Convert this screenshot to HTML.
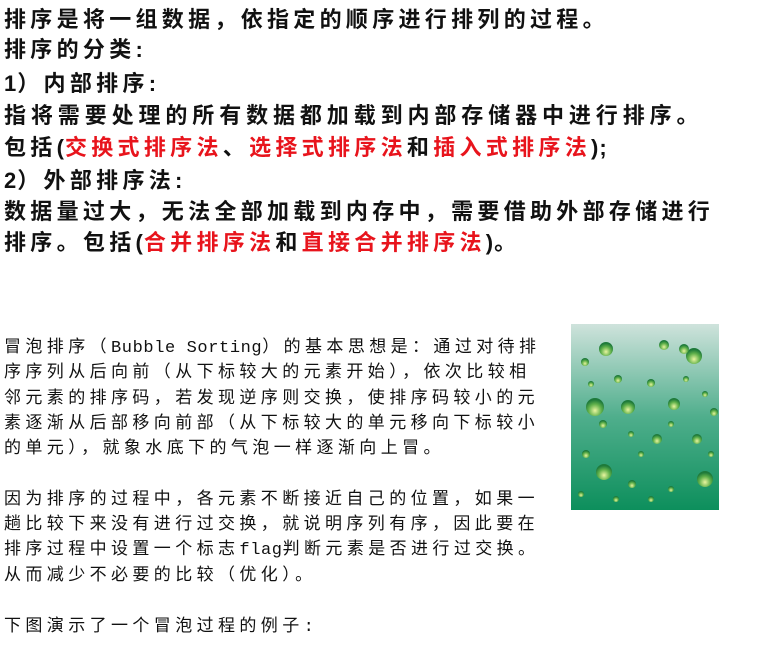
<!DOCTYPE html>
<html><head><meta charset="utf-8"><style>
body{margin:0;width:765px;height:646px;background:#fff;position:relative;overflow:hidden;font-family:"Liberation Serif","Noto Serif CJK SC","Noto Sans CJK SC",serif;color:#111}
.t{position:absolute;left:4px;white-space:nowrap;font-weight:bold;font-size:22px;letter-spacing:4.3px;line-height:26px;font-family:"Liberation Sans","Noto Sans CJK SC",sans-serif}
.r{color:#e8141c}
.s{position:absolute;left:4px;white-space:nowrap;font-size:17px;line-height:20px;font-family:"Liberation Mono","Noto Sans CJK SC",monospace;letter-spacing:4.4px}
.l{letter-spacing:0.6px}
.lt{letter-spacing:1px}
</style></head><body>
<div class="t" style="top:7px">排序是将一组数据，依指定的顺序进行排列的过程。</div>
<div class="t" style="top:37px">排序的分类:</div>
<div class="t" style="top:71px"><span class="lt">1</span>）内部排序:</div>
<div class="t" style="top:103px;letter-spacing:4.9px">指将需要处理的所有数据都加载到内部存储器中进行排序。</div>
<div class="t" style="top:135px">包括<span class="lt">(</span><span class="r">交换式排序法</span>、<span class="r">选择式排序法</span>和<span class="r">插入式排序法</span><span class="lt">)</span>;</div>
<div class="t" style="top:168px"><span class="lt">2</span>）外部排序法:</div>
<div class="t" style="top:199px">数据量过大，无法全部加载到内存中，需要借助外部存储进行</div>
<div class="t" style="top:230px">排序。包括<span class="lt">(</span><span class="r">合并排序法</span>和<span class="r">直接合并排序法</span><span class="lt">)</span>。</div>

<div class="s" style="top:339px">冒泡排序（<span class="l">Bubble Sorting</span>）的基本思想是：通过对待排</div>
<div class="s" style="top:364px">序序列从后向前（从下标较大的元素开始），依次比较相</div>
<div class="s" style="top:390px">邻元素的排序码，若发现逆序则交换，使排序码较小的元</div>
<div class="s" style="top:415px">素逐渐从后部移向前部（从下标较大的单元移向下标较小</div>
<div class="s" style="top:440px">的单元），就象水底下的气泡一样逐渐向上冒。</div>
<div class="s" style="top:491px">因为排序的过程中，各元素不断接近自己的位置，如果一</div>
<div class="s" style="top:516px">趟比较下来没有进行过交换，就说明序列有序，因此要在</div>
<div class="s" style="top:541px">排序过程中设置一个标志<span class="l">flag</span>判断元素是否进行过交换。</div>
<div class="s" style="top:567px">从而减少不必要的比较（优化）。</div>
<div class="s" style="top:618px">下图演示了一个冒泡过程的例子:</div>

<svg style="position:absolute;left:571px;top:324px" width="148" height="186" viewBox="0 0 148 186">
<defs>
<linearGradient id="g" x1="0" y1="0" x2="0" y2="1"><stop offset="0" stop-color="#cfe3dc"/><stop offset="0.5" stop-color="#4fae8c"/><stop offset="1" stop-color="#0d8f5c"/></linearGradient>
<radialGradient id="b" cx="0.5" cy="0.7" r="0.6"><stop offset="0" stop-color="#e9f5a0"/><stop offset="0.6" stop-color="#5fb04a"/><stop offset="1" stop-color="#1e7a3a"/></radialGradient>
</defs>
<rect width="148" height="186" fill="url(#g)"/>
<g fill="url(#b)">
<circle cx="35" cy="25" r="7"/><circle cx="93" cy="21" r="5"/><circle cx="123" cy="32" r="8"/><circle cx="14" cy="38" r="4"/><circle cx="24" cy="83" r="9"/><circle cx="113" cy="25" r="5"/><circle cx="57" cy="83" r="7"/><circle cx="103" cy="80" r="6"/><circle cx="47" cy="55" r="4"/><circle cx="80" cy="59" r="4"/><circle cx="143" cy="88" r="4"/><circle cx="33" cy="148" r="8"/><circle cx="134" cy="155" r="8"/><circle cx="86" cy="115" r="5"/><circle cx="15" cy="130" r="4"/><circle cx="126" cy="115" r="5"/><circle cx="61" cy="160" r="4"/><circle cx="100" cy="165" r="3"/><circle cx="32" cy="100" r="4"/><circle cx="70" cy="130" r="3"/><circle cx="115" cy="55" r="3"/><circle cx="134" cy="70" r="3"/><circle cx="10" cy="170" r="3"/><circle cx="80" cy="175" r="3"/><circle cx="45" cy="175" r="3"/><circle cx="100" cy="100" r="3"/><circle cx="60" cy="110" r="3"/><circle cx="20" cy="60" r="3"/><circle cx="140" cy="130" r="3"/>
</g>
</svg>
</body></html>
